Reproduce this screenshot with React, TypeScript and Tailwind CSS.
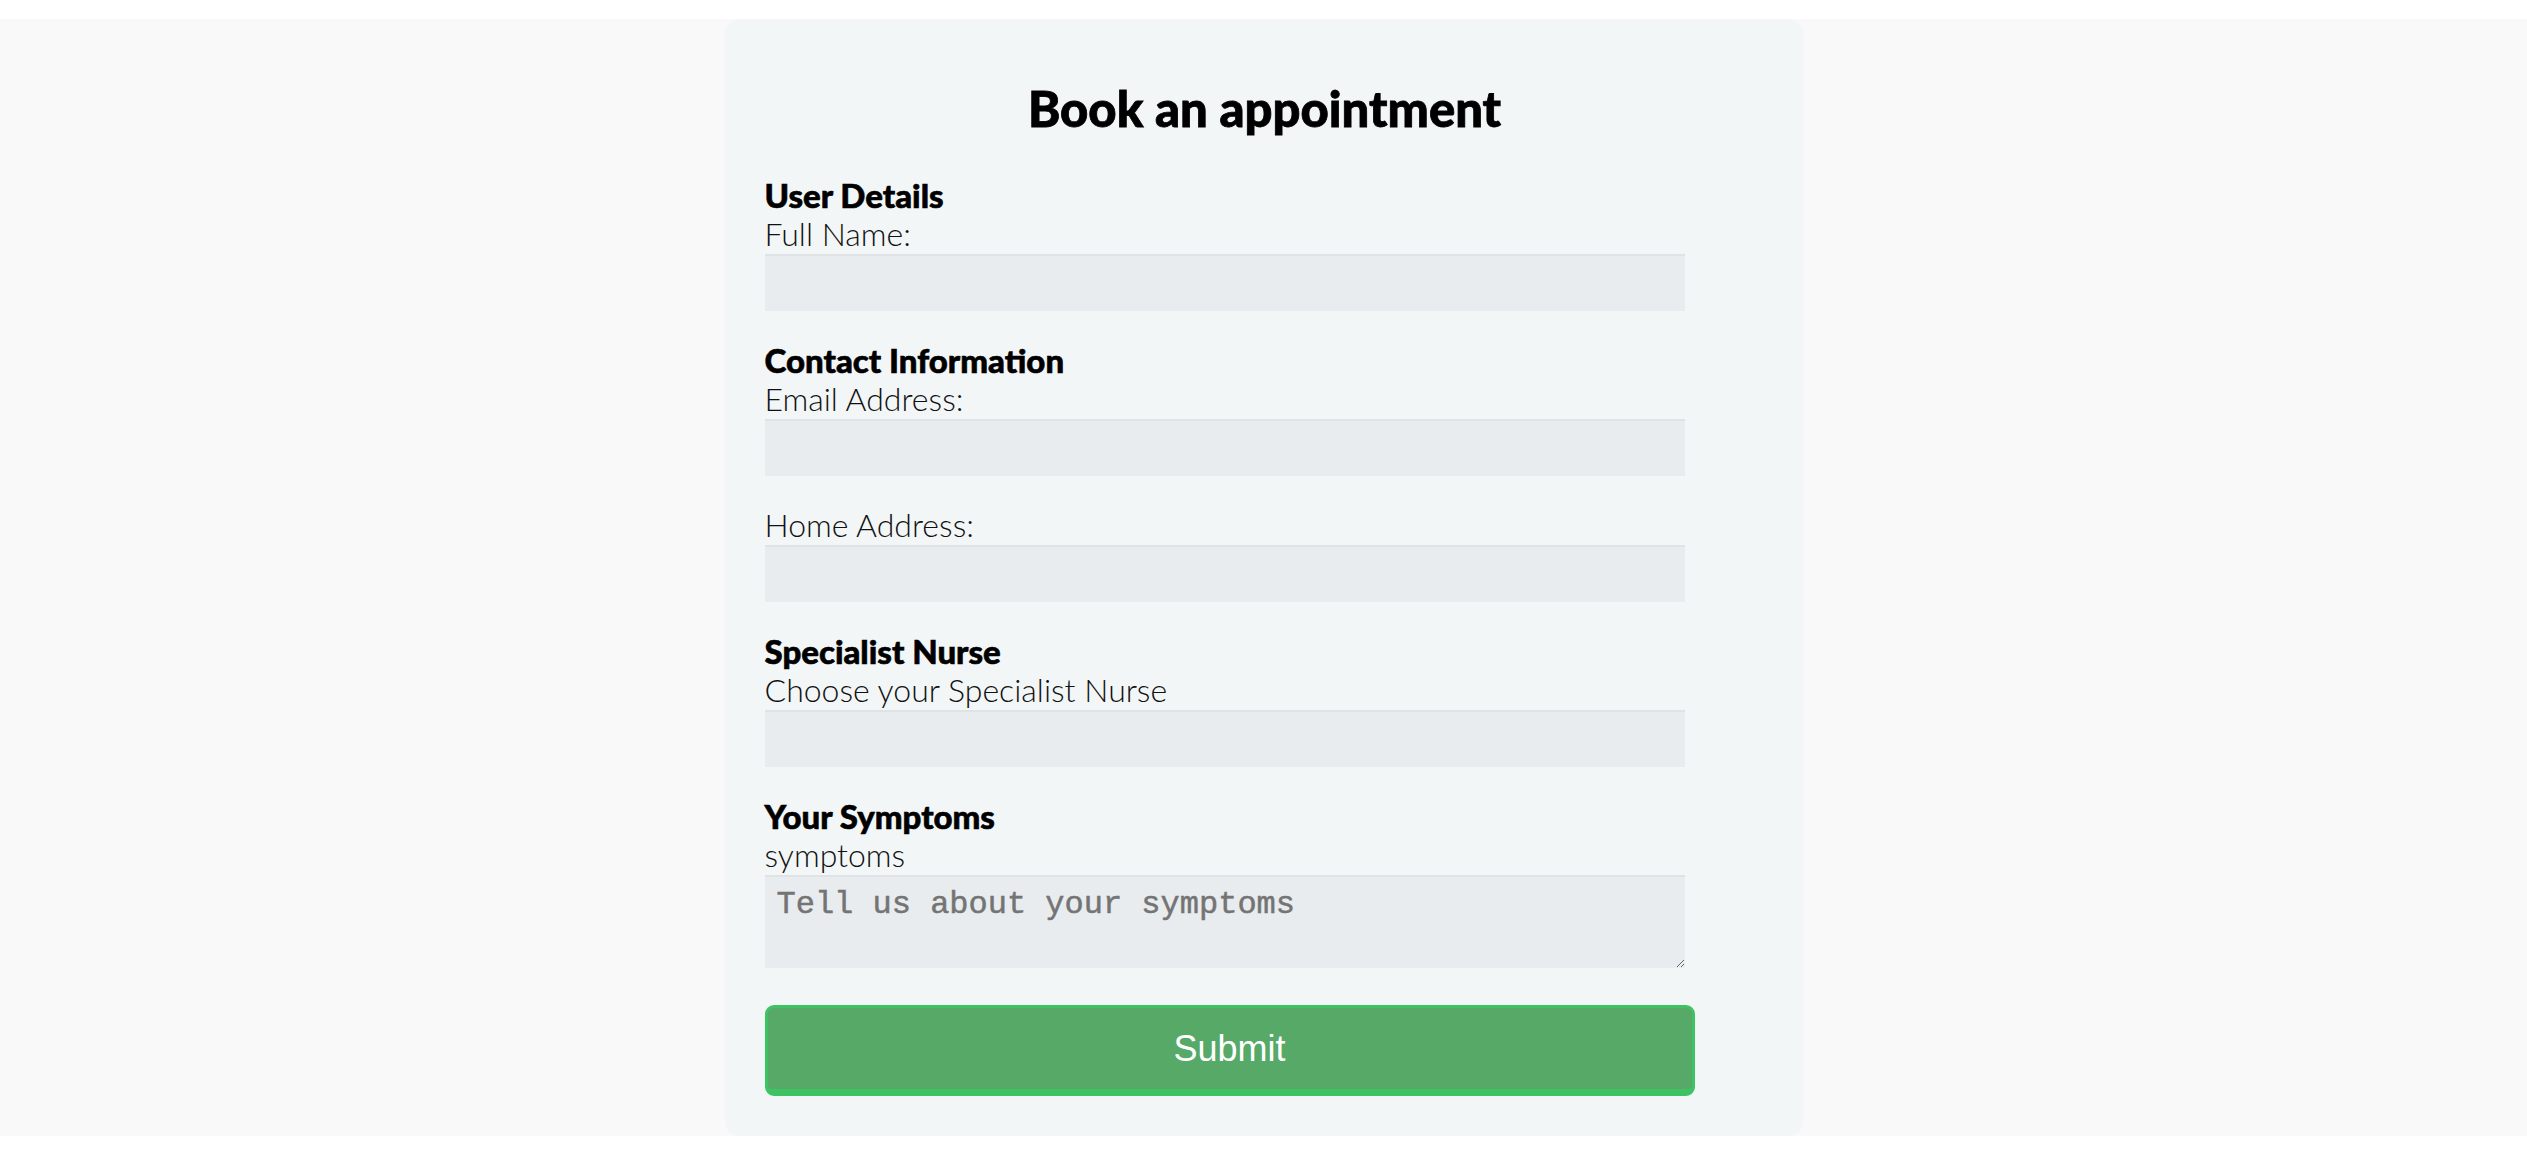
const lato = { fontFamily: 'Lato, "Open Sans", sans-serif' }
const latoBlack = { fontFamily: '"Lato Black", "Lato Heavy", Lato, sans-serif' }

function Field({ label, children }: { label: string; children: React.ReactNode }) {
  return (
    <div className="mb-[31px]">
      <label className="block h-[36px] text-[32px] leading-[36px] font-light text-[#111] mb-[2px]">{label}</label>
      {children}
    </div>
  )
}

function Heading({ text }: { text: string }) {
  return (
    <h3
      className="h-[36px] text-[33px] leading-[36px] font-black text-black mb-[3px] [-webkit-text-stroke:0.6px_black]"
      style={latoBlack}
    >
      {text}
    </h3>
  )
}

const inputCls =
  'block w-[920px] h-[57px] bg-[#e8ecee] border-t-2 border-[#dfe3e6] outline-none px-3'

export default function App() {
  return (
    <div className="min-h-screen bg-white pt-[19px]" style={lato}>
      <div className="bg-[#f9f9f9] flex justify-center">
        <div className="w-[1078px] bg-[#f2f6f7] rounded-[14px] pl-[40px] pr-[38px] pt-[59px] pb-[40px]">
          <h1
            className="text-center text-[49px] leading-[60px] font-black text-black mb-[39px] [-webkit-text-stroke:0.8px_black]"
            style={latoBlack}
          >
            Book an appointment
          </h1>

          <form onSubmit={(e) => e.preventDefault()}>
            <Heading text="User Details" />
            <Field label="Full Name:">
              <input type="text" className={inputCls} />
            </Field>

            <Heading text="Contact Information" />
            <Field label="Email Address:">
              <input type="email" className={inputCls} />
            </Field>
            <Field label="Home Address:">
              <input type="text" className={inputCls} />
            </Field>

            <Heading text="Specialist Nurse" />
            <Field label="Choose your Specialist Nurse">
              <div className={inputCls} />
            </Field>

            <Heading text="Your Symptoms" />
            <div className="mb-[37px]">
              <label className="block h-[36px] text-[32px] leading-[36px] font-light text-[#111] mb-[2px]">symptoms</label>
              <textarea
                placeholder="Tell us about your symptoms"
                className="block w-[920px] h-[93px] bg-[#e8ecee] border-t-2 border-[#dfe3e6] outline-none pl-[12px] pt-[10px] text-[32px] leading-[36px] placeholder:text-[#747474] placeholder:[-webkit-text-stroke:0.5px_#747474] resize"
                style={{ fontFamily: '"Liberation Mono", "Courier New", monospace' }}
              />
            </div>

            <button
              type="submit"
              className="block w-[930px] h-[91px] rounded-[9px] bg-[#57a968] border-[3px] border-b-[7px] border-[#3fc263] text-white text-[36px]"
              style={{ fontFamily: '"Liberation Sans", Arial, sans-serif' }}
            >
              Submit
            </button>
          </form>
        </div>
      </div>
    </div>
  )
}
